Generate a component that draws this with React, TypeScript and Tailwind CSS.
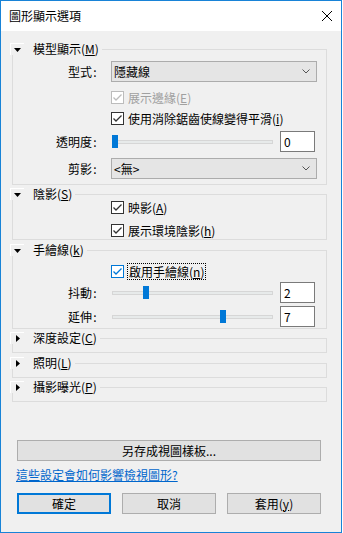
import React from "react";

const Check = ({ color }: { color: string }) => (
  <svg width="11" height="11" viewBox="0 0 11 11" className="block">
    <polyline points="1.5,5.5 4,8 9.5,2.5" fill="none" stroke={color} strokeWidth="1.3" />
  </svg>
);

const CheckBox = ({ variant }: { variant: "normal" | "disabled" | "focus" }) => {
  const border =
    variant === "disabled" ? "border-[#bcbcbc]" : variant === "focus" ? "border-[#0078d7]" : "border-[#333333]";
  const color = variant === "disabled" ? "#bcbcbc" : variant === "focus" ? "#0078d7" : "#333333";
  return (
    <div className={`w-[13px] h-[13px] shrink-0 border ${border} bg-white flex items-center justify-center`}>
      <Check color={color} />
    </div>
  );
};

const Chevron = () => (
  <svg width="8" height="5" viewBox="0 0 8 5" className="block">
    <polyline points="0.5,0.5 4,4 7.5,0.5" fill="none" stroke="#555" strokeWidth="1" />
  </svg>
);

const Label = ({ text }: { text: string }) => (
  <div className="w-[85px] shrink-0 flex justify-end whitespace-nowrap">
    {text}
    <span className="inline-block w-[6px] text-center">:</span>
  </div>
);

const Dropdown = ({ value }: { value: string }) => (
  <div className="ml-[13px] w-[206px] h-[21px] bg-[#e5e5e5] border border-[#acacac] flex items-center justify-between pl-[2px] pr-[6px]">
    <span>{value}</span>
    <Chevron />
  </div>
);

const Slider = ({ label, value, thumb }: { label: string; value: string; thumb: string }) => (
  <div className="flex items-center h-[21px]">
    <Label text={label} />
    <div className="ml-[14px] w-[161px] h-[13px] relative flex items-center">
      <div className="w-full h-[4px] bg-[#e7eaea] border border-[#d6d6d6]" />
      <div className={`absolute top-0 ${thumb} w-[6px] h-[13px] bg-[#0078d7]`} />
    </div>
    <div className="ml-[7px] w-[35px] h-[21px] border border-[#7a7a7a] bg-white flex items-center pl-[3px]">
      {value}
    </div>
  </div>
);

const Section = ({
  title,
  accel,
  expanded,
  mt,
  body,
  children,
}: {
  title: string;
  accel: string;
  expanded: boolean;
  mt: string;
  body: string;
  children?: React.ReactNode;
}) => (
  <div className={`flex flex-col ${mt}`}>
    <div className="flex items-center h-[12px] w-[317px]">
      <div className="w-[14px] h-[12px] shrink-0 border-l border-t border-white flex items-center justify-center">
        {expanded ? (
          <svg width="7" height="4" viewBox="0 0 7 4" className="block">
            <polygon points="0,0 7,0 3.5,4" fill="#000" />
          </svg>
        ) : (
          <svg width="4" height="7" viewBox="0 0 4 7" className="block">
            <polygon points="0,0 4,3.5 0,7" fill="#000" />
          </svg>
        )}
      </div>
      <div className="ml-[9px] whitespace-nowrap">
        {title}(<u>{accel}</u>)
      </div>
      <div className="flex-1 ml-[3px] self-end h-[6px] border-t border-r border-[#dcdcdc]" />
    </div>
    <div className={`ml-[2px] w-[315px] border-l border-r border-b border-[#dcdcdc] ${body}`}>{children}</div>
  </div>
);

export default function App() {
  return (
    <div className="w-[342px] h-[533px] border border-[#1883d7] bg-[#f0f0f0] flex flex-col text-[12px] leading-[14px] text-black font-['Noto_Sans_CJK_TC',sans-serif]">
      <div className="h-[30px] shrink-0 bg-white flex items-center justify-between pl-[8px] pr-[9px]">
        <span>圖形顯示選項</span>
        <svg width="10" height="10" viewBox="0 0 10 10" className="block">
          <line x1="0" y1="0" x2="10" y2="10" stroke="#000" strokeWidth="1" />
          <line x1="10" y1="0" x2="0" y2="10" stroke="#000" strokeWidth="1" />
        </svg>
      </div>

      <div className="flex flex-col pl-[9px] pt-[12px]">
        <Section title="模型顯示" accel="M" expanded mt="" body="h-[130px]">
          <div className="flex flex-col pt-[6px]">
            <div className="flex items-center h-[21px]">
              <Label text="型式" />
              <Dropdown value="隱藏線" />
            </div>
            <div className="flex items-center h-[21px] mt-[5px] pl-[98px]">
              <CheckBox variant="disabled" />
              <span className="ml-[4px] text-[#a0a0a0] whitespace-nowrap">
                展示邊緣(<u>E</u>)
              </span>
            </div>
            <div className="flex items-center h-[21px] pl-[98px]">
              <CheckBox variant="normal" />
              <span className="ml-[4px] whitespace-nowrap">
                使用消除鋸齒使線變得平滑(<u>i</u>)
              </span>
            </div>
            <div className="mt-[2px]">
              <Slider label="透明度" value="0" thumb="left-[0px]" />
            </div>
            <div className="flex items-center h-[21px] mt-[6px]">
              <Label text="剪影" />
              <Dropdown value="<無>" />
            </div>
          </div>
        </Section>

        <Section title="陰影" accel="S" expanded mt="mt-[3px]" body="h-[40px]">
          <div className="flex flex-col pt-[1px] pl-[98px]">
            <div className="flex items-center h-[13px]">
              <CheckBox variant="normal" />
              <span className="ml-[4px] whitespace-nowrap">
                映影(<u>A</u>)
              </span>
            </div>
            <div className="flex items-center h-[13px] mt-[10px]">
              <CheckBox variant="normal" />
              <span className="ml-[4px] whitespace-nowrap">
                展示環境陰影(<u>h</u>)
              </span>
            </div>
          </div>
        </Section>

        <Section title="手繪線" accel="k" expanded mt="mt-[4px]" body="h-[73px]">
          <div className="flex flex-col pt-[9px]">
            <div className="flex items-center h-[13px] pl-[98px]">
              <CheckBox variant="focus" />
              <span className="ml-[3px] h-[17px] px-[1px] flex items-center border border-dotted border-black whitespace-nowrap">
                啟用手繪線(<u>n</u>)
              </span>
            </div>
            <div className="mt-[4px]">
              <Slider label="抖動" value="2" thumb="left-[31px]" />
            </div>
            <div className="mt-[3px]">
              <Slider label="延伸" value="7" thumb="left-[108px]" />
            </div>
          </div>
        </Section>

        <Section title="深度設定" accel="C" expanded={false} mt="mt-[3px]" body="h-[9px]" />
        <Section title="照明" accel="L" expanded={false} mt="mt-[4px]" body="h-[9px]" />
        <Section title="攝影曝光" accel="P" expanded={false} mt="mt-[3px]" body="h-[9px]" />
      </div>

      <div className="flex flex-col pl-[16px]">
        <div className="mt-[38px] w-[304px] h-[21px] bg-[#e1e1e1] border border-[#adadad] flex items-center justify-center">
          另存成視圖樣板...
        </div>
        <div className="mt-[7px] -ml-[1px] h-[14px] flex items-center">
          <span className="text-[#0066cc] underline whitespace-nowrap">這些設定會如何影響檢視圖形?</span>
        </div>
        <div className="mt-[11px] flex gap-[11px]">
          <div className="w-[94px] h-[21px] bg-[#e1e1e1] border-2 border-[#0078d7] flex items-center justify-center">
            確定
          </div>
          <div className="w-[94px] h-[21px] bg-[#e1e1e1] border border-[#adadad] flex items-center justify-center">
            取消
          </div>
          <div className="w-[94px] h-[21px] bg-[#e1e1e1] border border-[#adadad] flex items-center justify-center">
            套用(<u>y</u>)
          </div>
        </div>
      </div>
    </div>
  );
}
